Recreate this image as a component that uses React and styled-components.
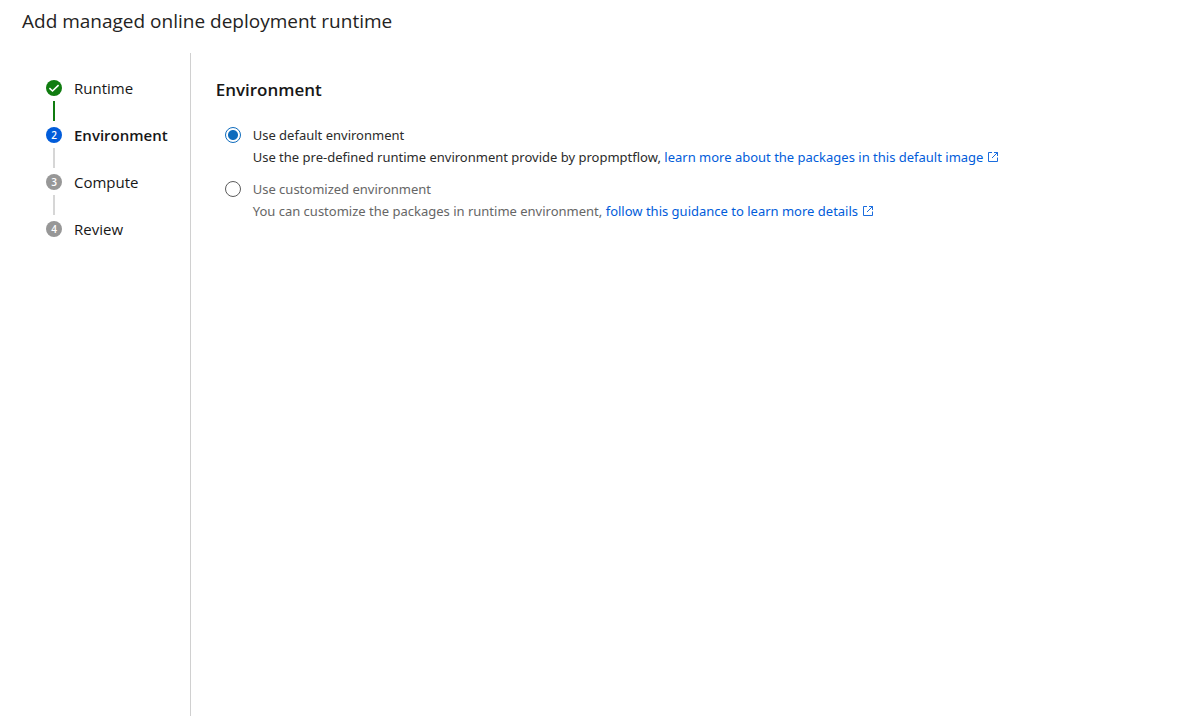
import React, { useState } from "react";
import styled, { createGlobalStyle } from "styled-components";

const GlobalStyle = createGlobalStyle`
  *, *::before, *::after { box-sizing: border-box; }
  body {
    margin: 0;
    background: #ffffff;
    color: #171717;
    font-family: "Open Sans", "Noto Sans", sans-serif;
  }
`;

const Page = styled.div`
  display: flex;
  flex-direction: column;
  min-height: 100vh;
`;

const Header = styled.header`
  padding: 7px 22px 18px;
`;

const Title = styled.h1`
  margin: 0;
  font-size: 19px;
  line-height: 28px;
  font-weight: 400;
  color: #242322;
`;

const Body = styled.div`
  display: flex;
  flex: 1;
`;

const Sidebar = styled.nav`
  flex: 0 0 auto;
  padding: 23px 22px 24px 46px;
  border-right: 1px solid #d0d0d0;
`;

const StepList = styled.ol`
  list-style: none;
  margin: 0;
  padding: 0;
`;

const Step = styled.li`
  &:not(:last-child)::after {
    content: "";
    display: block;
    width: 2px;
    height: 20px;
    margin: 1px 0 2px 7px;
    background: ${(p) => (p.$state === "done" ? "#107c10" : "#d6d6d6")};
  }
`;

const StepRow = styled.div`
  display: flex;
  align-items: center;
  gap: 12px;
  height: 24px;
`;

const markerColors = { done: "#107c10", current: "#015cda", upcoming: "#979797" };

const StepMarker = styled.span`
  display: flex;
  align-items: center;
  justify-content: center;
  width: 16px;
  height: 16px;
  border-radius: 50%;
  background: ${(p) => markerColors[p.$state]};
  color: #ffffff;
  font-size: 10px;
  line-height: 16px;
  font-weight: 600;
`;

const StepLabel = styled.span`
  font-size: 15px;
  line-height: 24px;
  font-weight: ${(p) => (p.$state === "current" ? 600 : 400)};
`;

const Main = styled.main`
  flex: 1;
  min-width: 0;
  padding: 24px 24px 24px 25px;
`;

const Heading = styled.h2`
  margin: 0 0 21px;
  font-size: 17px;
  line-height: 26px;
  font-weight: 600;
`;

const Options = styled.div`
  display: flex;
  flex-direction: column;
  gap: 10px;
  padding-left: 9px;
`;

const Option = styled.div`
  display: grid;
  grid-template-columns: 16px 1fr;
  column-gap: 12px;
  align-items: center;
  font-family: "Noto Sans", "Open Sans", sans-serif;
  font-size: 13px;
  line-height: 22px;
  color: ${(p) => (p.$selected ? "#2b2b2b" : "#666666")};
`;

const Radio = styled.input`
  appearance: none;
  width: 16px;
  height: 16px;
  margin: 0;
  border: 1px solid #5c5c5c;
  border-radius: 50%;

  &:checked {
    border-color: #0f6cbd;
    background: radial-gradient(circle, #0f6cbd 0 4.5px, transparent 5.5px);
  }
`;

const Description = styled.p`
  grid-column: 2;
  margin: 0;
`;

const Link = styled.a`
  color: #015cda;
  text-decoration: none;

  &:hover { text-decoration: underline; }
`;

const ExternalIcon = styled.svg`
  width: 12px;
  height: 12px;
  margin-left: 4px;
  vertical-align: -1px;
`;

const OpenInNew = () => (
  <ExternalIcon viewBox="0 0 12 12" fill="none" stroke="currentColor" strokeWidth="0.9" aria-hidden="true">
    <path d="M5 1.5H1.5V10.5H10.5V6.5M7 1.5H10.5V5M10.5 1.5L5 7" />
  </ExternalIcon>
);

const CheckMark = () => (
  <svg width="16" height="16" viewBox="0 0 16 16" fill="none" stroke="currentColor" strokeWidth="1.6" aria-hidden="true">
    <path d="M3.4 8.2L6.5 11L12.6 5.2" />
  </svg>
);

const steps = [
  { label: "Runtime", state: "done" },
  { label: "Environment", state: "current" },
  { label: "Compute", state: "upcoming" },
  { label: "Review", state: "upcoming" },
];

const options = [
  {
    id: "default",
    label: "Use default environment",
    text: "Use the pre-defined runtime environment provide by propmptflow,",
    link: "learn more about the packages in this default image",
  },
  {
    id: "customized",
    label: "Use customized environment",
    text: "You can customize the packages in runtime environment,",
    link: "follow this guidance to learn more details",
  },
];

export default function App() {
  const [selected, setSelected] = useState("default");

  return (
    <Page>
      <GlobalStyle />
      <Header>
        <Title>Add managed online deployment runtime</Title>
      </Header>
      <Body>
        <Sidebar aria-label="Steps">
          <StepList>
            {steps.map(({ label, state }, i) => (
              <Step key={label} $state={state} aria-current={state === "current" ? "step" : undefined}>
                <StepRow>
                  <StepMarker $state={state}>{state === "done" ? <CheckMark /> : i + 1}</StepMarker>
                  <StepLabel $state={state}>{label}</StepLabel>
                </StepRow>
              </Step>
            ))}
          </StepList>
        </Sidebar>
        <Main>
          <Heading id="environment-heading">Environment</Heading>
          <Options role="radiogroup" aria-labelledby="environment-heading">
            {options.map(({ id, label, text, link }) => (
              <Option key={id} $selected={selected === id}>
                <Radio
                  type="radio"
                  name="environment"
                  id={id}
                  checked={selected === id}
                  onChange={() => setSelected(id)}
                />
                <label htmlFor={id}>{label}</label>
                <Description>
                  {text}{" "}
                  <Link href="#">
                    {link}
                    <OpenInNew />
                  </Link>
                </Description>
              </Option>
            ))}
          </Options>
        </Main>
      </Body>
    </Page>
  );
}
